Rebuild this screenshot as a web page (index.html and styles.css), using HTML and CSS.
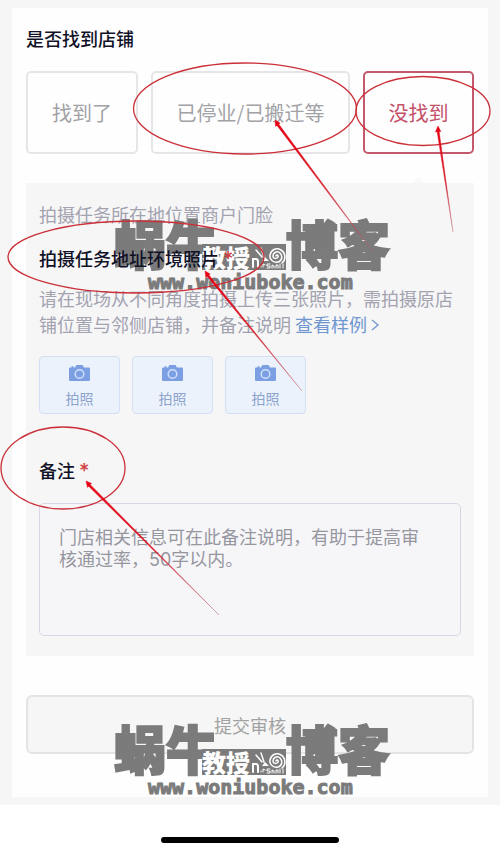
FILE: index.html
```html
<!DOCTYPE html>
<html lang="zh-CN">
<head>
<meta charset="utf-8">
<meta name="viewport" content="width=device-width, initial-scale=1">
<title>是否找到店铺</title>
<link rel="stylesheet" href="styles.css">
</head>
<body>
<svg class="defs" aria-hidden="true">
  <symbol id="camera" viewBox="0 0 21 16">
    <path fill="#7c9fe3" d="M1 2.500h1.500V1.300h2v1.200h1.600L7.300 0h6.400l1.200 2.500H20q1 0 1 1V15q0 1-1 1H1q-1 0-1-1V3.500q0-1 1-1z"/>
    <circle cx="10.500" cy="9" r="4.300" fill="#7c9fe3" stroke="#cfe0fa" stroke-width="1.500"/>
  </symbol>
  <symbol id="snail" viewBox="0 0 36 25">
    <g fill="none" stroke="#fff" stroke-linecap="round">
      <path stroke-width="1.500" d="M26 12c0-2 3-1 2 1s-5 2-5-1 4-6 7-3 2 8-2 9-9-2-8-7 6-8 11-5 5 10 1 13"/>
      <path stroke-width="1.500" d="M6 6l6 7M11 4l3 9"/>
      <path stroke-width="2" d="M3 23v-8h3q2 0 2 3v5"/>
      <path stroke-width="1" d="M11 22v1M13 23v-3l2 1M20 20h-3v2h3v2h-3M22 24v-3l2 1v2M26 24v-3h2v3M30 20v4M33 20v4"/>
    </g>
    <path fill="#fff" d="M12 17l3-4 4 4z"/>
  </symbol>
</svg>
<main class="page">
  <section class="card">
    <h1 class="title">是否找到店铺</h1>
    <div class="options">
      <button type="button" class="option">找到了</button>
      <button type="button" class="option">已停业/已搬迁等</button>
      <button type="button" class="option option-active" aria-pressed="true">没找到</button>
    </div>
    <div class="panel">
      <p class="hint">拍摄任务所在地位置商户门脸</p>
      <h2 class="label">拍摄任务地址环境照片 <span class="star">*</span></h2>
      <p class="desc">请在现场从不同角度拍摄上传三张照片，需拍摄原店铺位置与邻侧店铺，并备注说明 <a class="link" href="#">查看样例<svg class="chevron" viewBox="0 0 10 14" aria-hidden="true"><path d="M2 2l6 5-6 5"/></svg></a></p>
      <div class="photos">
        <button type="button" class="photo"><svg class="camera" aria-hidden="true"><use href="#camera"/></svg>拍照</button>
        <button type="button" class="photo"><svg class="camera" aria-hidden="true"><use href="#camera"/></svg>拍照</button>
        <button type="button" class="photo"><svg class="camera" aria-hidden="true"><use href="#camera"/></svg>拍照</button>
      </div>
      <label class="label label-note" for="note">备注 <span class="star">*</span></label>
      <textarea class="note" id="note" placeholder="门店相关信息可在此备注说明，有助于提高审核通过率，50字以内。"></textarea>
    </div>
    <button type="button" class="submit">提交审核</button>
  </section>
  <div class="mark mark-top">
    <div class="mark-row"><span>蜗牛</span><span class="mark-badge">教授<svg class="snail" aria-hidden="true"><use href="#snail"/></svg></span><span>博客</span></div>
    <div class="mark-url">www.woniuboke.com</div>
  </div>
  <div class="mark mark-bottom">
    <div class="mark-row"><span>蜗牛</span><span class="mark-badge">教授<svg class="snail" aria-hidden="true"><use href="#snail"/></svg></span><span>博客</span></div>
    <div class="mark-url">www.woniuboke.com</div>
  </div>
  <svg class="notes" viewBox="0 0 500 852" aria-hidden="true">
    <defs>
      <linearGradient id="fade" x1="0" y1="0" x2="0" y2="1">
        <stop offset="0" stop-color="#e60012"/>
        <stop offset=".5" stop-color="#d8202c"/>
        <stop offset="1" stop-color="#b8606c" stop-opacity=".6"/>
      </linearGradient>
    </defs>
    <g fill="none" stroke="#cb3038" stroke-width="1.300">
      <ellipse cx="245" cy="108.500" rx="111.500" ry="45.500"/>
      <ellipse cx="423" cy="111" rx="67" ry="34.500"/>
      <ellipse cx="136" cy="257" rx="128" ry="36"/>
      <ellipse cx="63" cy="468" rx="62" ry="41"/>
    </g>
    <g fill="url(#fade)" stroke="url(#fade)" stroke-width=".5">
      <path d="M275 120l5.200 3.200-1.400 1L373 252 277 125.500l-1.400 1z"/>
      <path d="M438 126l2.800 5.500-1.700.1L453 232l-15.800-100.200-1.700.1z"/>
      <path d="M205 271l5.200 3-1.300 1.100L302 391l-94.700-114.500-1.400 1z"/>
      <path d="M86 481l5.500 2.400-1.200 1.300L219 615 88.700 486.200l-1.200 1.200z"/>
    </g>
  </svg>
</main>
<div class="home"></div>
</body>
</html>
```
FILE: styles.css
```css
* { box-sizing: border-box; }

body {
  margin: 0;
  position: relative;
  background: #fff;
  font-family: "Noto Sans CJK SC", "Noto Sans", sans-serif;
  font-size: 18px;
  color: #111127;
}

button, textarea { font-family: inherit; }

.defs { position: absolute; width: 0; height: 0; }

.page { background: #f6f6f6; padding: 8px 12px; }

.card { background: #fefefe; padding: 16px 14px 43px; }

.title {
  margin: 0 0 19px;
  font-size: 18px;
  line-height: 28px;
  font-weight: 500;
}

.options {
  display: grid;
  grid-template-columns: 112fr 199fr 111fr;
  gap: 13px;
  margin-bottom: 29px;
}

.option {
  height: 83px;
  padding: 0;
  border: 2px solid #e6e6e8;
  border-radius: 5px;
  background: #fefefe;
  color: #a2a2a6;
  font-size: 20px;
  white-space: nowrap;
}

.option-active { border-color: #c4586c; color: #c4506a; }

.panel {
  position: relative;
  background: #f6f6f7;
  padding: 17px 13px 20px;
  margin-bottom: 39px;
}

.panel::before {
  content: "";
  position: absolute;
  top: -6px;
  right: 50px;
  border: 6px solid transparent;
  border-top: 0;
  border-bottom-color: #f9f9fa;
}

.hint { margin: 0; line-height: 28px; color: #a3a3b0; }

.label {
  display: block;
  position: relative;
  z-index: 2;
  margin: 16px 0 13px;
  font-size: 18px;
  line-height: 28px;
  font-weight: 500;
}

.star {
  color: #cf4040;
  font-family: Inter, sans-serif;
  font-size: 20px;
  line-height: 20px;
}

.desc { margin: 0 0 19px; line-height: 26px; color: #a3a3b0; }

.link { color: #7096d0; text-decoration: none; }

.chevron { width: 10px; height: 14px; margin-left: 3px; }

.chevron path { fill: none; stroke: #7c9cd0; stroke-width: 1.5; }

.photos { display: flex; gap: 12px; }

.photo {
  display: flex;
  flex-direction: column;
  align-items: center;
  gap: 7px;
  width: 81px;
  height: 58px;
  padding: 8px 0 0;
  border: 1px solid #d3dff3;
  border-radius: 4px;
  background: #ebf2fb;
  color: #8ba3cd;
  font-size: 14px;
  line-height: 20px;
}

.camera { width: 21px; height: 16px; }

.label-note { margin: 42px 0 19px; }

.note {
  display: block;
  width: 100%;
  height: 133px;
  padding: 23px 26px 0 19px;
  border: 1px solid #d8d8e4;
  border-radius: 5px;
  background: #f6f6f9;
  font-family: Inter, "Noto Sans CJK SC", sans-serif;
  font-size: 18px;
  line-height: 22px;
  resize: none;
}

.note::placeholder { color: #96969f; opacity: 1; }

.submit {
  display: block;
  width: 100%;
  height: 59px;
  border: 2px solid #e4e4e5;
  border-radius: 6px;
  background: #f6f6f6;
  color: #a2a2a2;
  font-size: 18px;
}

.mark {
  position: absolute;
  z-index: 1;
  left: 114px;
  color: #7b7b7b;
  pointer-events: none;
}

.mark-top { top: 216px; }

.mark-bottom { top: 721px; }

.mark-row {
  display: flex;
  align-items: flex-end;
  font-size: 52px;
  line-height: 54px;
  font-weight: 900;
  -webkit-text-stroke: 2px #7b7b7b;
}

.mark-badge {
  display: flex;
  z-index: 1;
  margin-left: -16px;
  width: 84px;
  background: #7b7b7b;
  color: #fff;
  font-size: 24px;
  line-height: 26px;
  -webkit-text-stroke: 0;
}

.snail { width: 36px; height: 25px; }

.mark-url {
  margin-left: 34px;
  font-family: "DejaVu Sans Mono", monospace;
  font-size: 20px;
  line-height: 24px;
  font-weight: 700;
  -webkit-text-stroke: 1px #7b7b7b;
}

.notes {
  position: absolute;
  z-index: 3;
  top: 0;
  left: 0;
  width: 100%;
  pointer-events: none;
}

.home {
  width: 178px;
  height: 6px;
  margin: 32px auto 9px;
  border-radius: 3px;
  background: #000;
}
```
